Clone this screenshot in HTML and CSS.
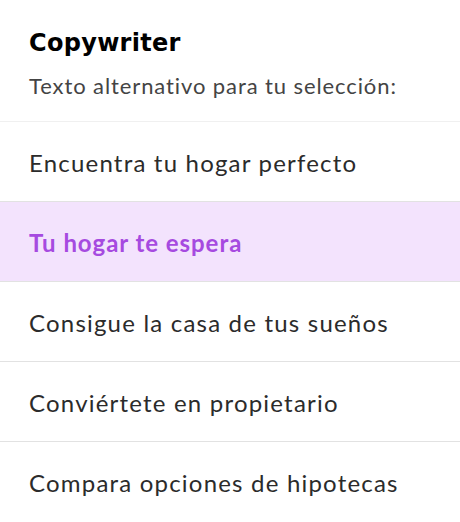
FILE: index.html
```html
<!DOCTYPE html>
<html lang="es">
<head>
    <meta charset="UTF-8" />
    <meta name="viewport" content="width=device-width, initial-scale=1.0" />
    <title>Copywriter</title>
    <link rel="stylesheet" href="styles.css">
</head>
<body>
<div class="panel">
    <div class="header">
        <h2>Copywriter</h2>
        <p>Texto alternativo para tu selección:</p>
    </div>
    <ul class="opciones">
        <li>Encuentra tu hogar perfecto</li>
        <li class="activa">Tu hogar te espera</li>
        <li>Consigue la casa de tus sueños</li>
        <li>Conviértete en propietario</li>
        <li>Compara opciones de hipotecas</li>
    </ul>
</div>
</body>
</html>
```

FILE: styles.css
```css
body {
    margin: 0;
    font-family: Lato, "Noto Sans", sans-serif;
    background-color: #fff;
    color: #2b2b2b;
}

.panel {
    width: 460px;
}

.header {
    padding: 28px 29px 23px 29px;
    border-bottom: 1px solid #f0f0f0;
}

.header h2 {
    margin: 0;
    font-family: "DejaVu Sans", sans-serif;
    font-size: 24px;
    font-weight: 700;
    letter-spacing: 0.3px;
    color: #000;
    line-height: 30px;
}

.header p {
    margin: 16px 0 0 0;
    font-size: 22px;
    letter-spacing: 0.9px;
    color: #444;
    line-height: 24px;
}

.opciones {
    list-style: none;
    margin: 0;
    padding: 0;
}

.opciones li {
    padding: 1px 29px 0 29px;
    box-sizing: border-box;
    height: 80px;
    display: flex;
    align-items: center;
    font-size: 24px;
    letter-spacing: 1.2px;
    border-bottom: 1px solid #e2e2e2;
}

.opciones li:last-child {
    border-bottom: none;
}

.opciones li.activa {
    background-color: #f3e3fd;
    color: #a64ae0;
    font-weight: 700;
    letter-spacing: 0.95px;
}
```
